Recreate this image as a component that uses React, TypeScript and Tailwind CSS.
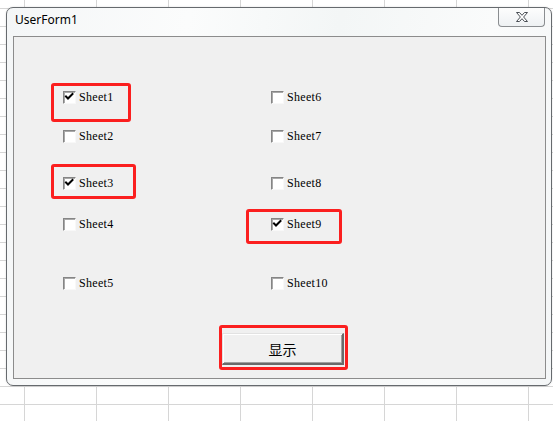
import React from "react";

function CheckBox({ checked }: { checked?: boolean }) {
  return (
    <span className="relative block w-[13px] h-[13px] shrink-0 border border-t-[#858585] border-l-[#858585] border-r-[#f8f8f8] border-b-[#f8f8f8] bg-white shadow-[inset_1px_1px_0_#a9a9a9]">
      {checked && (
        <svg width="11" height="11" viewBox="0 0 11 11" className="absolute left-0 top-0">
          <path d="M2 4.5 L4 6.5 L8.5 2" fill="none" stroke="#000" strokeWidth="2" strokeLinecap="square" />
        </svg>
      )}
    </span>
  );
}

function Item({ label, checked }: { label: string; checked?: boolean }) {
  return (
    <div className="flex items-center h-[13px]">
      <CheckBox checked={checked} />
      <span className="ml-[3px] text-[12px] leading-[13px] tracking-[0.3px] text-black font-['Liberation_Serif',serif]">
        {label}
      </span>
    </div>
  );
}

function Row({ a, b, ca, cb, mt }: { a: string; b: string; ca?: boolean; cb?: boolean; mt: string }) {
  return (
    <div className={`flex h-[13px] ${mt}`}>
      <div className="ml-[49px] w-[208px]">
        <Item label={a} checked={ca} />
      </div>
      <Item label={b} checked={cb} />
    </div>
  );
}

export default function App() {
  return (
    <div className="w-[553px] h-[421px] overflow-hidden bg-white bg-[linear-gradient(to_right,#d6d6d6_1px,transparent_1px),linear-gradient(to_bottom,#d6d6d6_1px,transparent_1px)] bg-size-[72px_18px] bg-position-[24px_8px] pt-[7px] pl-[6px]">
      <div className="w-[546px] h-[379px] rounded-[7px] border border-[#666a6e] bg-[linear-gradient(100deg,#f4f6f7_0%,#fbfcfc_30%,#f3f6f6_55%,#fafbfb_80%,#f4f6f7_100%)] flex flex-col pl-[6px] pr-[5px] shadow-[0_0_2px_rgba(0,0,0,0.15)]">
        <div className="h-[28px] flex items-start pl-[2px]">
          <span className="mt-[4px] text-[12px] leading-[16px] text-black font-['Noto_Sans',sans-serif]">UserForm1</span>
          <div className="ml-auto mr-[1px] w-[47px] h-[19px] rounded-b-[4px] border border-t-0 border-[#8a8d90] bg-[linear-gradient(to_bottom,#fdfdfd,#eef1f3)] flex items-center justify-center">
            <svg width="14" height="12" viewBox="0 0 14 12">
              <path
                d="M1.5 1.5 H4.5 L7 4.3 L9.5 1.5 H12.5 L8.6 6 L12.5 10.5 H9.5 L7 7.7 L4.5 10.5 H1.5 L5.4 6 Z"
                fill="#ffffff"
                stroke="#4a4f55"
                strokeWidth="1"
                strokeLinejoin="round"
              />
            </svg>
          </div>
        </div>
        <div className="relative w-[533px] h-[343px] border border-[#8c8c8c] bg-[#f0f0f0] flex flex-col pt-[54px]">
          <Row a="Sheet1" b="Sheet6" ca mt="" />
          <Row a="Sheet2" b="Sheet7" mt="mt-[26px]" />
          <Row a="Sheet3" b="Sheet8" ca mt="mt-[34px]" />
          <Row a="Sheet4" b="Sheet9" cb mt="mt-[28px]" />
          <Row a="Sheet5" b="Sheet10" mt="mt-[46px]" />
          <div className="mt-[43px] ml-[208px] w-[122px] h-[32px] border-t border-l border-t-[#e2e2e2] border-l-[#e2e2e2] border-r-2 border-b-2 border-r-[#6a6a6a] border-b-[#6a6a6a] bg-[#f0f0f0] shadow-[inset_1px_1px_0_#ffffff,inset_-1px_-1px_0_#a0a0a0] flex items-center justify-center">
            <span className="text-[14px] leading-[16px] text-black font-['Noto_Sans_CJK_SC',sans-serif]">显示</span>
          </div>

          <div className="absolute left-[37px] top-[46px] w-[80px] h-[39px] border-[3px] border-[#fb1f1f] rounded-[3px]" />
          <div className="absolute left-[37px] top-[127px] w-[85px] h-[35px] border-[3px] border-[#fb1f1f] rounded-[3px]" />
          <div className="absolute left-[232px] top-[172px] w-[96px] h-[35px] border-[3px] border-[#fb1f1f] rounded-[3px]" />
          <div className="absolute left-[205px] top-[288px] w-[129px] h-[45px] border-[3px] border-[#fb1f1f] rounded-[3px]" />
        </div>
      </div>
    </div>
  );
}
